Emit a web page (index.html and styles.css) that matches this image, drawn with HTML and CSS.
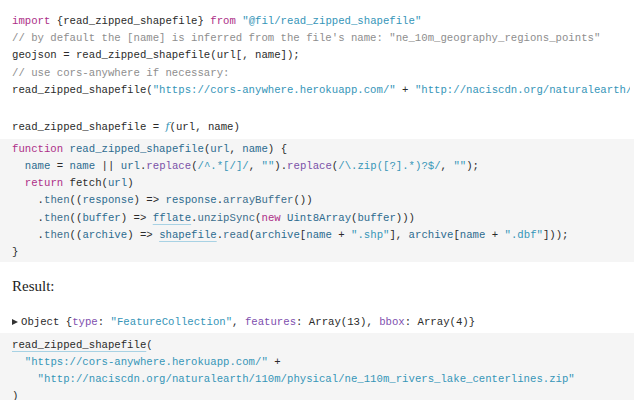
FILE: index.html
```html
<!DOCTYPE html>
<html>
<head>
<meta charset="utf-8">
<link rel="stylesheet" href="styles.css">
</head>
<body>
<div class="page">
  <div class="cell first">
<pre class="code"><span class="kw">import</span> {read_zipped_shapefile} <span class="kw">from</span> <span class="str">"@fil/read_zipped_shapefile"</span>
<span class="cm">// by default the [name] is inferred from the file's name: "ne_10m_geography_regions_points"</span>
geojson = read_zipped_shapefile(url[, name]);
<span class="cm">// use cors-anywhere if necessary:</span>
read_zipped_shapefile(<span class="str">"https://cors-anywhere.herokuapp.com/"</span> + <span class="str">"http://naciscdn.org/naturalearth/110m/physical/ne_110m_rivers_lake_centerlines.zip"</span>);</pre>
  </div>
  <div class="cell sig">
<pre class="code">read_zipped_shapefile = <span class="fn">f</span>(url, name)</pre>
  </div>
  <div class="cell gray fnblock">
<pre class="code"><span class="kw">function</span> <span class="var">read_zipped_shapefile</span>(<span class="var">url</span>, <span class="var">name</span>) {
  <span class="var">name</span> = <span class="var">name</span> || <span class="var">url</span>.<span class="pr">replace</span>(<span class="str">/^.*[/]/</span>, <span class="str">""</span>).<span class="pr">replace</span>(<span class="str">/\.zip([?].*)?$/</span>, <span class="str">""</span>);
  <span class="kw">return</span> fetch(<span class="var">url</span>)
    .<span class="mp">then</span>((<span class="var">response</span>) =&gt; <span class="var">response</span>.<span class="mp">arrayBuffer</span>())
    .<span class="mp">then</span>((<span class="var">buffer</span>) =&gt; <span class="link var">fflate</span>.<span class="mp">unzipSync</span>(<span class="kw">new</span> <span class="var">Uint8Array</span>(<span class="var">buffer</span>)))
    .<span class="mp">then</span>((<span class="var">archive</span>) =&gt; <span class="link var">shapefile</span>.<span class="mp">read</span>(<span class="var">archive</span>[<span class="var">name</span> + <span class="str">".shp"</span>], <span class="var">archive</span>[<span class="var">name</span> + <span class="str">".dbf"</span>]));
}</pre>
  </div>
  <p class="result">Result:</p>
  <div class="cell obj">
<pre class="code"><span class="tri"></span>Object {<span class="key">type</span>: <span class="str">"FeatureCollection"</span>, <span class="key">features</span>: Array(13), <span class="key">bbox</span>: Array(4)}</pre>
  </div>
  <div class="cell gray last">
<pre class="code"><span class="link">read_zipped_shapefile</span>(
  <span class="str">"https://cors-anywhere.herokuapp.com/"</span> +
    <span class="str">"http://naciscdn.org/naturalearth/110m/physical/ne_110m_rivers_lake_centerlines.zip"</span>
)</pre>
  </div>
</div>
</body>
</html>
```
FILE: styles.css
```css
html, body {
  margin: 0;
  padding: 0;
  background: #ffffff;
}
.page {
  width: 634px;
  overflow: hidden;
}
.cell {
  padding: 0 12px;
  overflow: hidden;
}
.code {
  margin: 0;
  font-family: "Liberation Mono", "DejaVu Sans Mono", monospace;
  font-size: 10.67px;
  line-height: 17.2px;
  color: #2b2b2b;
  white-space: pre;
  overflow: hidden;
}
.first {
  padding-top: 13px;
  padding-right: 4px;
}
.sig { margin-top: 18.5px; }
.gray { background: #f5f5f5; }
.fnblock {
  margin-top: 3px;
  padding-top: 2px;
  padding-bottom: 1px;
}
.result {
  margin: 14px 0 0;
  padding: 0 12px;
  font-family: "Liberation Serif", "Times New Roman", serif;
  font-size: 15px;
  line-height: 20px;
  color: #222;
}
.obj { margin-top: 17.4px; }
.last {
  margin-top: 2.4px;
  padding-top: 3.4px;
  padding-bottom: 4px;
}
.kw { color: #ad2f88; }
.str { color: #3595b8; }
.cm { color: #8e8e8e; }
.var { color: #2c6b8f; }
.pr { color: #7a52a8; }
.mp { color: #3a6d8c; }
.key { color: #7e4fae; }
.fn {
  font-family: "DejaVu Serif", "Liberation Serif", serif;
  font-style: italic;
  font-size: 11px;
  color: #3595b8;
}
.link {
  text-decoration: underline;
  text-decoration-color: #a8d2e4;
  text-underline-offset: 3px;
}
.tri {
  display: inline-block;
  width: 0;
  height: 0;
  border-left: 6px solid #333;
  border-top: 3.5px solid transparent;
  border-bottom: 3.5px solid transparent;
  margin-right: 3px;
  vertical-align: 0;
}
```
